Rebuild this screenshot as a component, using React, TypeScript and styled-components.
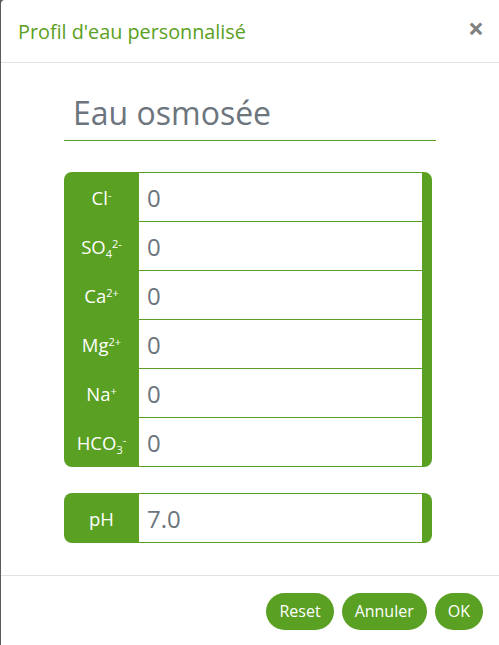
import React from "react";
import styled, { createGlobalStyle } from "styled-components";

const GREEN = "#5aa022";

const Global = createGlobalStyle`
  html, body { margin: 0; padding: 0; height: 100%; }
  body {
    background: #5c5c5c;
    font-family: "Open Sans", "Noto Sans", sans-serif;
  }
  #root { height: 100%; }
`;

const Modal = styled.div`
  margin-left: 1px;
  min-height: 100%;
  background: #fff;
  border-top-left-radius: 4px;
  display: flex;
  flex-direction: column;
`;

const Header = styled.div`
  height: 62px;
  padding: 0 15px 0 17px;
  display: flex;
  align-items: center;
  justify-content: space-between;
  border-bottom: 1px solid #e0e0e6;
`;

const Title = styled.h5`
  margin: 0;
  font-size: 19.8px;
  font-weight: 400;
  color: ${GREEN};
`;

const Close = styled.button`
  border: 0;
  background: none;
  padding: 0;
  margin-top: -6px;
  font-family: "Open Sans", sans-serif;
  font-size: 28px;
  font-weight: 700;
  line-height: 1;
  color: #808080;
  cursor: pointer;
`;

const Body = styled.div`
  padding: 22px 63px 32px 63px;
  display: flex;
  flex-direction: column;
`;

const NameInput = styled.input`
  box-sizing: border-box;
  width: 372px;
  height: 56px;
  border: 0;
  border-bottom: 1px solid ${GREEN};
  padding: 0 9px;
  font-family: "Open Sans", sans-serif;
  font-size: 32px;
  color: #6c757d;
  outline: none;
  background: transparent;
`;

const Group = styled.div<{ $top: number }>`
  margin-top: ${(p) => p.$top}px;
  width: 368px;
  display: grid;
  grid-template-columns: 75px 1fr 10px;
  grid-auto-rows: 48px;
  row-gap: 1px;
  padding: 1px 0;
  background: ${GREEN};
  border-radius: 8px;
`;

const Label = styled.div`
  grid-column: 1;
  display: flex;
  align-items: center;
  justify-content: center;
  color: #fff;
  font-size: 18.5px;
  font-weight: 500;
`;

const Formula = styled.span`
  sup, sub {
    font-size: 11px;
    line-height: 0;
  }
  sup { vertical-align: 6px; }
  sub { vertical-align: -4px; }
`;

const Value = styled.input`
  grid-column: 2;
  box-sizing: border-box;
  width: 100%;
  height: 100%;
  border: 0;
  padding: 0 8px;
  font-family: "Open Sans", sans-serif;
  font-size: 24px;
  color: #6c757d;
  background: #fff;
  outline: none;
`;

const Spacer = styled.div`
  grid-column: 3;
`;

const Footer = styled.div`
  margin-top: auto;
  flex: 1;
  border-top: 1px solid #e0e0e6;
  display: flex;
  align-items: center;
  justify-content: flex-end;
  gap: 8px;
  padding: 0 16px 0 0;
  min-height: 70px;
`;

const Btn = styled.button`
  height: 37px;
  padding: 0 13px;
  border: 0;
  border-radius: 19px;
  background: ${GREEN};
  color: #fff;
  font-family: "Open Sans", sans-serif;
  font-size: 16px;
  font-weight: 400;
  cursor: pointer;
`;

const ions: { key: string; label: React.ReactNode }[] = [
  { key: "cl", label: <>Cl<sup>-</sup></> },
  { key: "so4", label: <>SO<sub>4</sub><sup>2-</sup></> },
  { key: "ca", label: <>Ca<sup>2+</sup></> },
  { key: "mg", label: <>Mg<sup>2+</sup></> },
  { key: "na", label: <>Na<sup>+</sup></> },
  { key: "hco3", label: <>HCO<sub>3</sub><sup>-</sup></> },
];

export default function App() {
  return (
    <>
      <Global />
      <Modal>
        <Header>
          <Title>Profil d'eau personnalisé</Title>
          <Close aria-label="Fermer">×</Close>
        </Header>
        <Body>
          <NameInput defaultValue="Eau osmosée" />
          <Group $top={31}>
            {ions.map((ion) => (
              <React.Fragment key={ion.key}>
                <Label>
                  <Formula>{ion.label}</Formula>
                </Label>
                <Value defaultValue="0" />
                <Spacer />
              </React.Fragment>
            ))}
          </Group>
          <Group $top={26}>
            <Label>
              <Formula>pH</Formula>
            </Label>
            <Value defaultValue="7.0" />
            <Spacer />
          </Group>
        </Body>
        <Footer>
          <Btn>Reset</Btn>
          <Btn>Annuler</Btn>
          <Btn>OK</Btn>
        </Footer>
      </Modal>
    </>
  );
}
